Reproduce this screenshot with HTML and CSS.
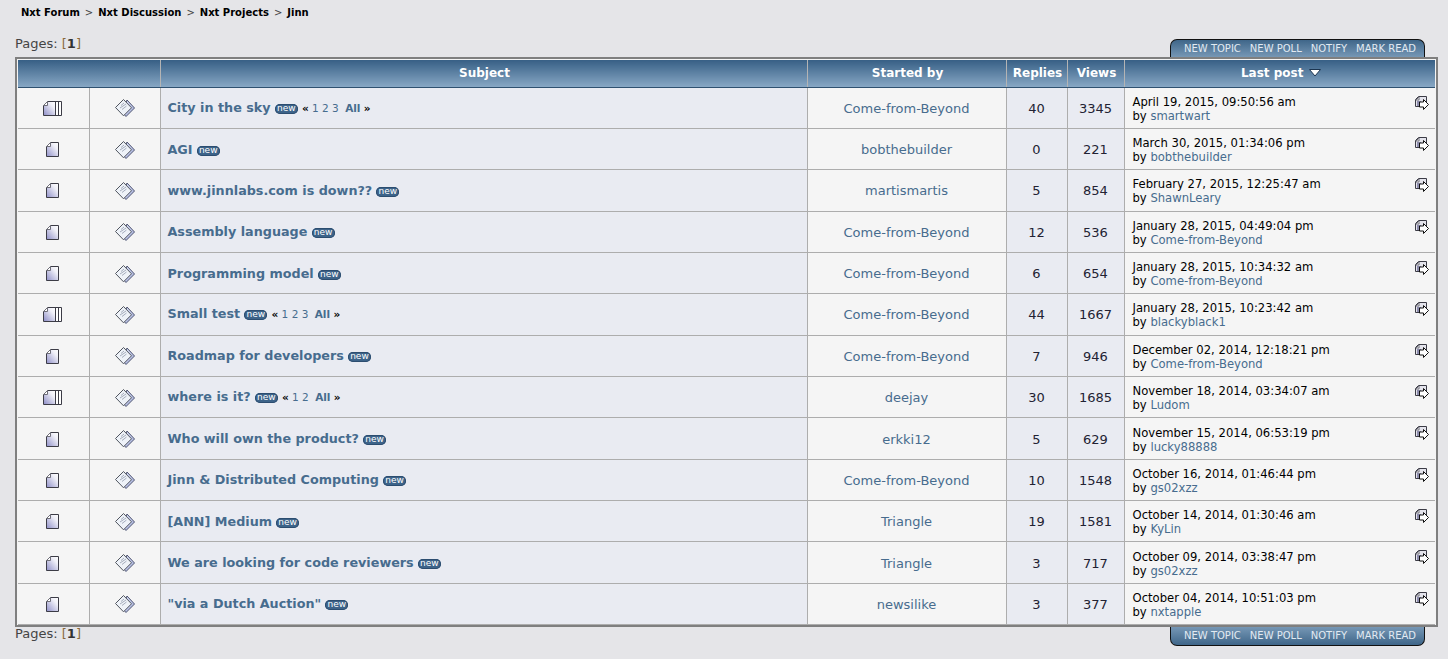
FILE: index.html
```html
<!DOCTYPE html>
<html lang="en">
<head>
<meta charset="utf-8">
<title>Jinn</title>
<link rel="stylesheet" href="styles.css">
</head>
<body>
<svg class="defs" width="0" height="0" aria-hidden="true">
  <defs>
    <linearGradient id="fill" x1="0" y1="1" x2="1" y2="0">
      <stop offset="0" stop-color="#9090c8"/>
      <stop offset="0.7" stop-color="#f0f0f8"/>
      <stop offset="1" stop-color="#ffffff"/>
    </linearGradient>
    <linearGradient id="back" x1="0" y1="0" x2="1" y2="1">
      <stop offset="0" stop-color="#dfe4f6"/>
      <stop offset="1" stop-color="#a4aedc"/>
    </linearGradient>
    <symbol id="doc" viewBox="0 0 13 15">
      <path d="M4.500.5H12.500V14.500H.5V4.500Z" fill="url(#fill)" stroke="#3c3c46"/>
      <path d="M.5 4.500H4.500V.5Z" fill="#fff" stroke="#6e6e78"/>
    </symbol>
    <symbol id="docs" viewBox="0 0 19 15">
      <path d="M4.500.5H18.500V14.500H.5V4.500Z" fill="#fff" stroke="#3c3c46"/>
      <path d="M4.500 1H12.500V14H1V4.500Z" fill="url(#fill)"/>
      <path d="M12.500 1V14M15.500 1V14" stroke="#3c3c46" fill="none"/>
      <path d="M.5 4.500H4.500V.5Z" fill="#fff" stroke="#6e6e78"/>
    </symbol>
    <symbol id="post" viewBox="0 0 20 18">
      <path d="M12 1 19.500 9 11 17.500 7 13Z" fill="url(#back)" stroke="#4e5470"/>
      <path d="M8.500 .5 16.500 8.800 8.500 16.800 .5 8.500Z" fill="#eef2f8" stroke="#50555f"/>
      <path d="M6 6.500 9 4M5 9 11 5M7 10.500 11.500 7" stroke="#a4acbc" fill="none"/>
    </symbol>
    <symbol id="last" viewBox="0 0 14 14">
      <path d="M3.500.5H11.500V10.500H.5V3.500Z" fill="#e4e4ec" stroke="#3c3c46"/>
      <path d="M1 4H4V1Z" fill="#fff" stroke="#70707a"/>
      <path d="M2 5H6V10H2Z" fill="#8c8cac"/>
      <path d="M8.500 3.500 13.500 8.500 8.500 13.500V11H4.500V6H8.500Z" fill="#fff" stroke="#111"/>
    </symbol>
  </defs>
</svg>

<nav class="crumbs">
  <a href="#">Nxt Forum</a><span class="sep">&gt;</span><a href="#">Nxt Discussion</a><span class="sep">&gt;</span><a href="#">Nxt Projects</a><span class="sep">&gt;</span><a href="#">Jinn</a>
</nav>

<div class="bar bar-top">
  <div class="pages">Pages: <span class="br">[</span><b>1</b><span class="br">]</span></div>
  <div class="tabs tabs-top"><a href="#">NEW TOPIC</a><a href="#">NEW POLL</a><a href="#">NOTIFY</a><a href="#">MARK READ</a></div>
</div>

<div class="frame">
<table class="topics">
  <colgroup>
    <col class="c1"><col class="c2"><col class="c3"><col class="c4"><col class="c5"><col class="c6"><col class="c7">
  </colgroup>
  <thead>
    <tr>
      <th colspan="2"></th>
      <th>Subject</th>
      <th>Started by</th>
      <th>Replies</th>
      <th>Views</th>
      <th>Last post <svg class="sort" width="12" height="8" viewBox="0 0 12 8"><path d="M.5.5H11.500L6 7Z" fill="#fff" stroke="#1c3550"/></svg></th>
    </tr>
  </thead>
  <tbody>
    <tr>
      <td class="ic"><svg class="i-docs"><use href="#docs"/></svg></td>
      <td class="ic"><svg class="i-post"><use href="#post"/></svg></td>
      <td class="subj"><a class="t" href="#">City in the sky</a> <span class="new">new</span> <span class="pg"><b>«</b> <a href="#">1</a> <a href="#">2</a> <a href="#">3</a> <a class="all" href="#">All</a> <b>»</b></span></td>
      <td class="by"><a href="#">Come-from-Beyond</a></td>
      <td class="n alt">40</td><td class="n alt">3345</td>
      <td class="lp"><div>April 19, 2015, 09:50:56 am<br>by <a href="#">smartwart</a></div><svg class="i-last"><use href="#last"/></svg></td>
    </tr>
    <tr>
      <td class="ic"><svg class="i-doc"><use href="#doc"/></svg></td>
      <td class="ic"><svg class="i-post"><use href="#post"/></svg></td>
      <td class="subj"><a class="t" href="#">AGI</a> <span class="new">new</span></td>
      <td class="by"><a href="#">bobthebuilder</a></td>
      <td class="n alt">0</td><td class="n alt">221</td>
      <td class="lp"><div>March 30, 2015, 01:34:06 pm<br>by <a href="#">bobthebuilder</a></div><svg class="i-last"><use href="#last"/></svg></td>
    </tr>
    <tr>
      <td class="ic"><svg class="i-doc"><use href="#doc"/></svg></td>
      <td class="ic"><svg class="i-post"><use href="#post"/></svg></td>
      <td class="subj"><a class="t" href="#">www.jinnlabs.com is down??</a> <span class="new">new</span></td>
      <td class="by"><a href="#">martismartis</a></td>
      <td class="n alt">5</td><td class="n alt">854</td>
      <td class="lp"><div>February 27, 2015, 12:25:47 am<br>by <a href="#">ShawnLeary</a></div><svg class="i-last"><use href="#last"/></svg></td>
    </tr>
    <tr>
      <td class="ic"><svg class="i-doc"><use href="#doc"/></svg></td>
      <td class="ic"><svg class="i-post"><use href="#post"/></svg></td>
      <td class="subj"><a class="t" href="#">Assembly language</a> <span class="new">new</span></td>
      <td class="by"><a href="#">Come-from-Beyond</a></td>
      <td class="n alt">12</td><td class="n alt">536</td>
      <td class="lp"><div>January 28, 2015, 04:49:04 pm<br>by <a href="#">Come-from-Beyond</a></div><svg class="i-last"><use href="#last"/></svg></td>
    </tr>
    <tr>
      <td class="ic"><svg class="i-doc"><use href="#doc"/></svg></td>
      <td class="ic"><svg class="i-post"><use href="#post"/></svg></td>
      <td class="subj"><a class="t" href="#">Programming model</a> <span class="new">new</span></td>
      <td class="by"><a href="#">Come-from-Beyond</a></td>
      <td class="n alt">6</td><td class="n alt">654</td>
      <td class="lp"><div>January 28, 2015, 10:34:32 am<br>by <a href="#">Come-from-Beyond</a></div><svg class="i-last"><use href="#last"/></svg></td>
    </tr>
    <tr>
      <td class="ic"><svg class="i-docs"><use href="#docs"/></svg></td>
      <td class="ic"><svg class="i-post"><use href="#post"/></svg></td>
      <td class="subj"><a class="t" href="#">Small test</a> <span class="new">new</span> <span class="pg"><b>«</b> <a href="#">1</a> <a href="#">2</a> <a href="#">3</a> <a class="all" href="#">All</a> <b>»</b></span></td>
      <td class="by"><a href="#">Come-from-Beyond</a></td>
      <td class="n alt">44</td><td class="n alt">1667</td>
      <td class="lp"><div>January 28, 2015, 10:23:42 am<br>by <a href="#">blackyblack1</a></div><svg class="i-last"><use href="#last"/></svg></td>
    </tr>
    <tr>
      <td class="ic"><svg class="i-doc"><use href="#doc"/></svg></td>
      <td class="ic"><svg class="i-post"><use href="#post"/></svg></td>
      <td class="subj"><a class="t" href="#">Roadmap for developers</a> <span class="new">new</span></td>
      <td class="by"><a href="#">Come-from-Beyond</a></td>
      <td class="n alt">7</td><td class="n alt">946</td>
      <td class="lp"><div>December 02, 2014, 12:18:21 pm<br>by <a href="#">Come-from-Beyond</a></div><svg class="i-last"><use href="#last"/></svg></td>
    </tr>
    <tr>
      <td class="ic"><svg class="i-docs"><use href="#docs"/></svg></td>
      <td class="ic"><svg class="i-post"><use href="#post"/></svg></td>
      <td class="subj"><a class="t" href="#">where is it?</a> <span class="new">new</span> <span class="pg"><b>«</b> <a href="#">1</a> <a href="#">2</a> <a class="all" href="#">All</a> <b>»</b></span></td>
      <td class="by"><a href="#">deejay</a></td>
      <td class="n alt">30</td><td class="n alt">1685</td>
      <td class="lp"><div>November 18, 2014, 03:34:07 am<br>by <a href="#">Ludom</a></div><svg class="i-last"><use href="#last"/></svg></td>
    </tr>
    <tr>
      <td class="ic"><svg class="i-doc"><use href="#doc"/></svg></td>
      <td class="ic"><svg class="i-post"><use href="#post"/></svg></td>
      <td class="subj"><a class="t" href="#">Who will own the product?</a> <span class="new">new</span></td>
      <td class="by"><a href="#">erkki12</a></td>
      <td class="n alt">5</td><td class="n alt">629</td>
      <td class="lp"><div>November 15, 2014, 06:53:19 pm<br>by <a href="#">lucky88888</a></div><svg class="i-last"><use href="#last"/></svg></td>
    </tr>
    <tr>
      <td class="ic"><svg class="i-doc"><use href="#doc"/></svg></td>
      <td class="ic"><svg class="i-post"><use href="#post"/></svg></td>
      <td class="subj"><a class="t" href="#">Jinn &amp; Distributed Computing</a> <span class="new">new</span></td>
      <td class="by"><a href="#">Come-from-Beyond</a></td>
      <td class="n alt">10</td><td class="n alt">1548</td>
      <td class="lp"><div>October 16, 2014, 01:46:44 pm<br>by <a href="#">gs02xzz</a></div><svg class="i-last"><use href="#last"/></svg></td>
    </tr>
    <tr>
      <td class="ic"><svg class="i-doc"><use href="#doc"/></svg></td>
      <td class="ic"><svg class="i-post"><use href="#post"/></svg></td>
      <td class="subj"><a class="t" href="#">[ANN] Medium</a> <span class="new">new</span></td>
      <td class="by"><a href="#">Triangle</a></td>
      <td class="n alt">19</td><td class="n alt">1581</td>
      <td class="lp"><div>October 14, 2014, 01:30:46 am<br>by <a href="#">KyLin</a></div><svg class="i-last"><use href="#last"/></svg></td>
    </tr>
    <tr>
      <td class="ic"><svg class="i-doc"><use href="#doc"/></svg></td>
      <td class="ic"><svg class="i-post"><use href="#post"/></svg></td>
      <td class="subj"><a class="t" href="#">We are looking for code reviewers</a> <span class="new">new</span></td>
      <td class="by"><a href="#">Triangle</a></td>
      <td class="n alt">3</td><td class="n alt">717</td>
      <td class="lp"><div>October 09, 2014, 03:38:47 pm<br>by <a href="#">gs02xzz</a></div><svg class="i-last"><use href="#last"/></svg></td>
    </tr>
    <tr>
      <td class="ic"><svg class="i-doc"><use href="#doc"/></svg></td>
      <td class="ic"><svg class="i-post"><use href="#post"/></svg></td>
      <td class="subj"><a class="t" href="#">"via a Dutch Auction"</a> <span class="new">new</span></td>
      <td class="by"><a href="#">newsilike</a></td>
      <td class="n alt">3</td><td class="n alt">377</td>
      <td class="lp"><div>October 04, 2014, 10:51:03 pm<br>by <a href="#">nxtapple</a></div><svg class="i-last"><use href="#last"/></svg></td>
    </tr>
  </tbody>
</table>
</div>

<div class="bar bar-bottom">
  <div class="pages">Pages: <span class="br">[</span><b>1</b><span class="br">]</span></div>
  <div class="tabs tabs-bottom"><a href="#">NEW TOPIC</a><a href="#">NEW POLL</a><a href="#">NOTIFY</a><a href="#">MARK READ</a></div>
</div>
</body>
</html>
```
FILE: styles.css
```css
* { box-sizing: border-box; }
html, body { margin: 0; height: 100%; }
body {
  background: #e5e5e8;
  color: #000;
  font: 13px/15px "DejaVu Sans", Verdana, sans-serif;
  padding: 0 10px 0 15px;
  overflow: hidden;
}
a { color: #476c8e; text-decoration: none; }
.defs { position: absolute; }

.crumbs {
  height: 24px;
  padding: 7px 0 0 6px;
  font-size: 10px;
  line-height: 12px;
  font-weight: bold;
}
.crumbs a { color: #000; }
.crumbs .sep { color: #444; font-weight: normal; margin: 0 5px; }

.bar { display: flex; justify-content: space-between; align-items: flex-start; }
.bar-top { height: 33px; padding-right: 13px; }
.bar-bottom { height: 32px; padding-right: 13px; }
.pages { color: #444; font-size: 13px; line-height: 15px; }
.bar-top .pages { margin-top: 12px; }
.bar-bottom .pages { margin-top: -1px; }
.br { color: #8a6a3a; }
.pages b { color: #333; }

.tabs {
  width: 255px;
  height: 18px;
  display: flex;
  justify-content: flex-end;
  gap: 9px;
  padding-right: 8px;
  font-size: 10px;
  line-height: 17px;
  border: 1px solid #111;
  background: linear-gradient(#3f6689, #7697b5);
}
.tabs a { color: #e2eaf2; }
.tabs-top { margin-top: 15px; border-bottom: 0; border-radius: 7px 7px 0 0; }
.tabs-bottom { border-top: 0; border-radius: 0 0 7px 7px; background: linear-gradient(#7697b5, #3f6689); height: 19px; }

.frame {
  border: 2px solid #7f7f7f;
  padding: 1px;
  background: #f4f4f4;
  height: 570px;
}
.topics {
  width: 100%;
  table-layout: fixed;
  border-collapse: collapse;
}
.c1 { width: 71px; }
.c2 { width: 71px; }
.c3 { width: 647px; }
.c4 { width: 199px; }
.c5 { width: 61px; }
.c6 { width: 57px; }
.topics th {
  height: 27px;
  padding: 0 0 0 2px;
  color: #fff;
  font-size: 12px;
  background: linear-gradient(#375f85, #87a7c4);
  border-left: 1px solid #b4b4b4;
  border-bottom: 1px solid #2f5170;
}
.topics th:first-child { border-left: 0; }
.sort { margin-left: 1px; }
.topics td {
  height: 41.37px;
  padding: 1px 0 0;
  background: #f5f5f5;
  border-left: 1px solid #adadad;
  border-bottom: 1px solid #adadad;
  text-align: center;
  vertical-align: middle;
}
.topics td:first-child { border-left: 0; padding-right: 2px; }
.topics td.subj { text-align: left; padding: 0 0 0 7px; background: #e9ebf2; }
.topics td.alt { background: #e9ebf2; }
.topics td.n { color: #223; font-size: 13px; }
.ic svg { display: block; margin: 0 auto; }
.i-doc { width: 13px; height: 15px; }
.i-docs { width: 19px; height: 15px; }
.i-post { width: 20px; height: 18px; }
.t { font-weight: bold; font-size: 12.75px; }
.new {
  display: inline-block;
  width: 23px;
  height: 10px;
  border-radius: 5px;
  background: #3d6389;
  box-shadow: inset 0 0 0 1px #2c4d70;
  color: #fff;
  font-size: 9px;
  line-height: 8px;
  text-align: center;
  vertical-align: 1px;
}
.pg { font-size: 10.5px; }
.pg b { color: #000; }
.pg .all { font-weight: bold; margin-left: 3px; }
.topics td.lp {
  text-align: left;
  padding: 2px 8px 0;
  font-size: 11.6px;
  line-height: 14px;
  position: relative;
}
.i-last { position: absolute; right: 6px; top: 8px; width: 14px; height: 14px; }
```
